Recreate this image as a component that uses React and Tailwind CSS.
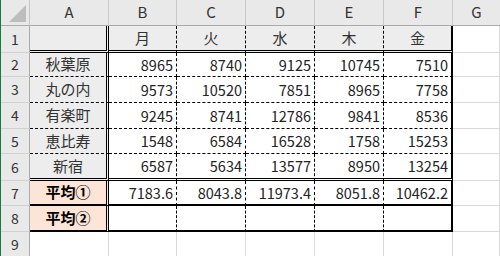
import React from "react";

const cols = ["A", "B", "C", "D", "E", "F", "G"];
const headerRow = ["", "月", "火", "水", "木", "金"];
const data = [
  ["秋葉原", "8965", "8740", "9125", "10745", "7510"],
  ["丸の内", "9573", "10520", "7851", "8965", "7758"],
  ["有楽町", "9245", "8741", "12786", "9841", "8536"],
  ["恵比寿", "1548", "6584", "16528", "1758", "15253"],
  ["新宿", "6587", "5634", "13577", "8950", "13254"],
  ["平均①", "7183.6", "8043.8", "11973.4", "8051.8", "10462.2"],
  ["平均②", "", "", "", "", ""],
];

function rightCls(c) {
  if (c === 0) return "border-r-[3px] [border-right-style:double]";
  if (c === 5) return "border-r-2 [border-right-style:solid]";
  return "border-r [border-right-style:dashed]";
}

function bottomCls(r) {
  if (r === 1 || r === 6) return "border-b-[3px] [border-bottom-style:double]";
  if (r >= 7) return "border-b-2 [border-bottom-style:solid]";
  return "border-b [border-bottom-style:dashed]";
}

function bgCls(r, c) {
  if (r >= 7 && c === 0) return "bg-[#fce4d6] font-bold text-black";
  if (r === 1 || c === 0) return "bg-[#ededed] text-[#333]";
  return "bg-white text-[#222]";
}

export default function App() {
  const rows = [];
  for (let r = 1; r <= 9; r++) {
    const cells = [];
    cells.push(
      <div
        key={"h" + r}
        className="flex items-center justify-center bg-[#e9e9e9] border-r border-b border-r-[#ababab] border-b-[#d0d0d0] text-[14px] text-[#333]"
      >
        {r}
      </div>
    );
    for (let c = 0; c < 7; c++) {
      const inTable = r <= 8 && c <= 5;
      if (!inTable) {
        cells.push(
          <div key={r + "-" + c} className="border-r border-b border-[#d9d9d9] bg-white" />
        );
        continue;
      }
      let text = "";
      if (r === 1) text = headerRow[c];
      else text = data[r - 2][c];
      const isCenter = r === 1 || c === 0;
      cells.push(
        <div
          key={r + "-" + c}
          className={
            "flex items-center border-black px-[3px] whitespace-nowrap " +
            rightCls(c) +
            " " +
            bottomCls(r) +
            " " +
            bgCls(r, c) +
            " " +
            (isCenter ? "justify-center text-[15px]" : "justify-end text-[14.5px]")
          }
        >
          {text}
        </div>
      );
    }
    rows.push(cells);
  }

  return (
    <div
      className="w-[500px] h-[256px] overflow-hidden bg-white border-l border-[#217346]"
      style={{ fontFamily: '"Noto Sans CJK JP", "Noto Sans", sans-serif' }}
    >
      <div className="grid grid-cols-[29px_79px_68px_69px_69px_69px_69px_1fr] grid-rows-[26px_27px_24px_26px_26px_25px_27px_25px_26px_26px]">
        <div className="relative bg-[#e9e9e9] border-r border-b border-r-[#c6c6c6] border-b-[#ababab]">
          <svg className="absolute left-[8px] top-[5px]" width="18" height="18" viewBox="0 0 18 18">
            <polygon points="17,0 17,17 0,17" fill="#bdbdbd" />
          </svg>
        </div>
        {cols.map((h, i) => (
          <div
            key={h}
            className={
              "flex items-center justify-center bg-[#e9e9e9] border-b border-b-[#ababab] text-[15px] text-[#333] " +
              (i < 6 ? "border-r border-r-[#c9c9c9]" : "")
            }
          >
            {h}
          </div>
        ))}
        {rows.flat()}
      </div>
    </div>
  );
}
